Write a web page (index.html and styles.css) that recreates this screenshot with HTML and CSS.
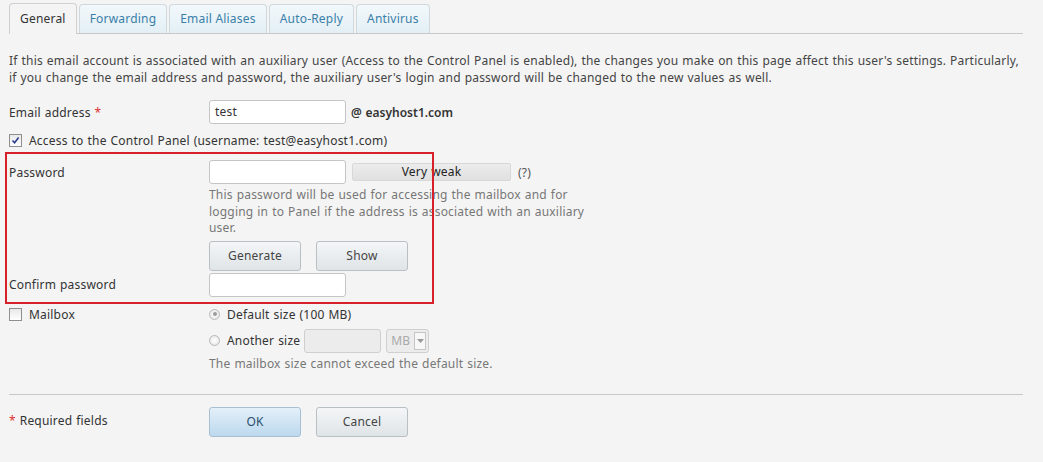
FILE: index.html
```html
<!DOCTYPE html>
<html>
<head>
<meta charset="utf-8">
<link rel="stylesheet" href="styles.css">
</head>
<body>
<div class="page">
  <div class="tabs">
    <div class="tab active">General</div>
    <div class="tab">Forwarding</div>
    <div class="tab">Email Aliases</div>
    <div class="tab">Auto-Reply</div>
    <div class="tab">Antivirus</div>
  </div>
  <p class="intro">If this email account is associated with an auxiliary user (Access to the Control Panel is enabled), the changes you make on this page affect this user's settings. Particularly, if you change the email address and password, the auxiliary user's login and password will be changed to the new values as well.</p>

  <div class="row r-email">
    <div class="label">Email address <span class="req">*</span></div>
    <div class="inline">
      <div class="input">test</div>
      <span class="domain">@ easyhost1.com</span>
    </div>
  </div>

  <div class="row r-check">
    <label class="check"><span class="cb checked"><svg width="9" height="9" viewBox="0 0 9 9"><path d="M1.5 4.5 L3.6 6.8 L7.6 1.6" fill="none" stroke="#2b3f8c" stroke-width="1.6"/></svg></span>Access to the Control Panel (username: test@easyhost1.com)</label>
  </div>

  <div class="pwblock">
    <div class="row r-pass">
      <div class="label">Password</div>
      <div class="field">
        <div class="inline">
          <div class="input"></div>
          <div class="strength">Very weak</div>
          <span class="qm">(?)</span>
        </div>
        <div class="hint">This password will be used for accessing the mailbox and for logging in to Panel if the address is associated with an auxiliary user.</div>
        <div class="btns">
          <div class="btn">Generate</div>
          <div class="btn">Show</div>
        </div>
      </div>
    </div>
    <div class="row r-confirm">
      <div class="label">Confirm password</div>
      <div class="field"><div class="input"></div></div>
    </div>
    <div class="redbox"></div>
  </div>

  <div class="row r-mailbox">
    <div class="label"><label class="check"><span class="cb"></span>Mailbox</label></div>
    <div class="field">
      <div class="radio-row"><span class="radio on"></span>Default size (100 MB)</div>
      <div class="radio-row r2"><span class="radio"></span>Another size <div class="input disabled small"></div><div class="select"><span>MB</span><span class="arrow"><svg width="7" height="4" viewBox="0 0 7 4"><path d="M0 0 L7 0 L3.5 4 Z" fill="#999"/></svg></span></div></div>
      <div class="hint">The mailbox size cannot exceed the default size.</div>
    </div>
  </div>

  <div class="sep"></div>

  <div class="row r-footer">
    <div class="label"><span class="req">*</span> Required fields</div>
    <div class="btns">
      <div class="btn primary">OK</div>
      <div class="btn">Cancel</div>
    </div>
  </div>
</div>
</body>
</html>
```

FILE: styles.css
```css
html, body {
  margin: 0;
  padding: 0;
  background: #f4f4f4;
}
body {
  font-family: "Noto Sans", "DejaVu Sans", sans-serif;
  font-size: 12px;
  letter-spacing: 0.2px;
  word-spacing: 0.6px;
  color: #333;
}
.page {
  padding: 3px 20px 0 9px;
}
.tabs {
  display: flex;
  gap: 2px;
  border-bottom: 1px solid #c8c8c8;
  height: 30px;
  align-items: flex-end;
}
.tab {
  height: 29px;
  box-sizing: border-box;
  padding: 0 10px;
  line-height: 28px;
  border: 1px solid #cfd8dc;
  border-bottom: none;
  border-radius: 4px 4px 0 0;
  background: linear-gradient(#f2f8fb, #e3eff5);
  color: #3a7fa8;
  word-spacing: 0;
}
.tab.active {
  background: #f4f4f4;
  color: #333;
  border-color: #d0d0d0;
  height: 31px;
  margin-bottom: -1px;
  line-height: 30px;
}
.intro {
  margin: 18px 0 0 0;
  line-height: 17px;
  color: #444;
}
.row {
  display: flex;
}
.label {
  width: 200px;
  flex: none;
  color: #333;
}
.req { color: #d33; }
.field { display: flex; flex-direction: column; }
.inline { display: flex; align-items: center; }
.r-email { margin-top: 14px; align-items: center; }
.input {
  width: 137px;
  height: 24px;
  box-sizing: border-box;
  border: 1px solid #c5c5c5;
  border-radius: 3px;
  background: #fff;
  padding: 0 5px;
  line-height: 22px;
  color: #333;
}
.domain { margin-left: 5px; font-weight: 600; color: #333; letter-spacing: 0; }
.r-check { margin-top: 8px; }
.check { display: flex; align-items: center; }
.cb {
  width: 11px;
  height: 11px;
  border: 1px solid #8f8f8f;
  background: linear-gradient(#e8e8e8, #fff);
  margin-right: 7px;
  display: inline-flex;
  align-items: center;
  justify-content: center;
}
.pwblock { position: relative; margin-top: 11px; }
.redbox {
  position: absolute;
  left: -4px;
  top: -8px;
  width: 429px;
  height: 152px;
  box-sizing: border-box;
  border: 2px solid #d7202a;
  pointer-events: none;
}
.r-pass .label { padding-top: 4px; }
.strength {
  margin-left: 6px;
  width: 159px;
  height: 18px;
  box-sizing: border-box;
  border: 1px solid #d8d8d8;
  border-radius: 2px;
  background: linear-gradient(#ececec, #e0e0e0);
  text-align: center;
  line-height: 16px;
  color: #222;
}
.qm { margin-left: 7px; color: #555; }
.hint {
  color: #777;
  line-height: 16.5px;
  width: 385px;
  margin-top: 3px;
}
.btns { display: flex; gap: 15px; margin-top: 4px; }
.btn {
  width: 92px;
  height: 30px;
  box-sizing: border-box;
  border: 1px solid #b9c0c4;
  border-radius: 3px;
  background: linear-gradient(#f4f6f7, #dfe4e7);
  text-align: center;
  line-height: 28px;
  color: #444;
}
.btn.primary {
  background: linear-gradient(#e4f0f9, #bcd8ee);
  border-color: #a6bfd2;
  color: #2b4d6b;
}
.r-confirm { margin-top: 2px; }
.r-confirm .label { padding-top: 3px; }
.r-mailbox { margin-top: 9px; }
.radio-row { display: flex; align-items: center; height: 17px; }
.radio-row.r2 { height: 24px; margin-top: 6px; }
.radio {
  width: 11px;
  height: 11px;
  border-radius: 50%;
  border: 1px solid #b8b8b8;
  background: radial-gradient(#fff, #e2e2e2);
  margin-right: 7px;
  box-sizing: border-box;
  position: relative;
}
.radio.on::after {
  content: "";
  position: absolute;
  left: 2.5px; top: 2.5px;
  width: 4px; height: 4px;
  border-radius: 50%;
  background: #9a9a9a;
}
.input.disabled {
  background: #ececec;
  border-color: #cfcfcf;
}
.input.small { width: 77px; margin-left: 4px; }
.select {
  margin-left: 5px;
  width: 43px;
  height: 24px;
  box-sizing: border-box;
  border: 1px solid #cfcfcf;
  border-radius: 3px;
  background: #ececec;
  display: flex;
  align-items: center;
  justify-content: space-between;
  padding-left: 4px;
  color: #aaa;
}
.select .arrow {
  width: 12px;
  height: 18px;
  margin-right: 2px;
  border: 1px solid #c5c5c5;
  background: #f7f7f7;
  display: flex;
  align-items: center;
  justify-content: center;
  box-sizing: border-box;
}
.r-mailbox .hint { margin-top: 3px; }
.sep {
  margin-top: 22px;
  border-top: 1px solid #c8c8c8;
}
.r-footer { margin-top: 12px; }
.r-footer .label { padding-top: 5px; }
.r-footer .btns { margin-top: 0; }
```
